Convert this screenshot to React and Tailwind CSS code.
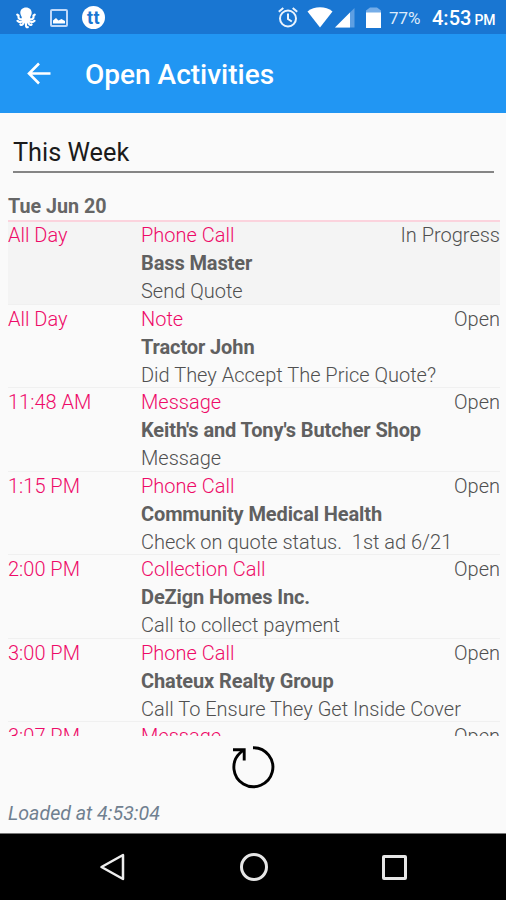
const activities = [
  { time: "All Day", type: "Phone Call", status: "In Progress", company: "Bass Master", note: "Send Quote", selected: true },
  { time: "All Day", type: "Note", status: "Open", company: "Tractor John", note: "Did They Accept The Price Quote?" },
  { time: "11:48 AM", type: "Message", status: "Open", company: "Keith's and Tony's Butcher Shop", note: "Message" },
  { time: "1:15 PM", type: "Phone Call", status: "Open", company: "Community Medical Health", note: "Check on quote status.  1st ad 6/21" },
  { time: "2:00 PM", type: "Collection Call", status: "Open", company: "DeZign Homes Inc.", note: "Call to collect payment" },
  { time: "3:00 PM", type: "Phone Call", status: "Open", company: "Chateux Realty Group", note: "Call To Ensure They Get Inside Cover" },
  { time: "3:07 PM", type: "Message", status: "Open", company: "", note: "" },
];

function OctopusIcon() {
  return (
    <svg width="20" height="22" viewBox="0 0 20 22" fill="none" stroke="#fff" strokeWidth="2.2" strokeLinecap="round">
      <path d="M10 .5c-3.500 0-5.700 2.300-5.700 5.400 0 2 1.400 3 1.500 4.800l.2 4.800h8l.2-4.800c.1-1.800 1.500-2.800 1.500-4.800C15.700 2.800 13.500.5 10 .5z" fill="#fff" stroke="none" />
      <path d="M7 12c-3 1-5 0-4.500-3.500L1.300 7.700M13 12c3 1 5 0 4.500-3.500l1.200-.8" />
      <path d="M7.500 13c-2 3-4.500 2.500-6 .8M12.500 13c2 3 4.500 2.500 6 .8" />
      <path d="M8 14c0 3-2 4.500-3.600 3.500M12 14c0 3 2 4.500 3.600 3.500M10 14v4c0 1.500.6 2.500 1.800 2.200" />
    </svg>
  );
}

function PictureIcon() {
  return (
    <svg width="18" height="18" viewBox="0 0 18 18">
      <rect x="1" y="1" width="16" height="16" rx="1" fill="none" stroke="#bfd9fa" strokeWidth="2" />
      <path d="M3 14.500v-3l3-2.500 2.500 2.500 3-1.500 3.500 2v2.500z" fill="#fff" />
    </svg>
  );
}

function AlarmIcon() {
  return (
    <svg width="20" height="21" viewBox="0 0 20 21" fill="none" stroke="#eaf3fd" strokeWidth="2">
      <circle cx="10" cy="11.500" r="8" />
      <path d="M10 6.500V12l3.800 2.500M.8 4.800 5.300 1M19.200 4.800 14.700 1" />
    </svg>
  );
}

function StatusBar() {
  return (
    <div className="flex h-[34px] shrink-0 items-start bg-[#1976d2] text-white">
      <div className="ml-4 mt-[7px]"><OctopusIcon /></div>
      <div className="ml-[14px] mt-[9px]"><PictureIcon /></div>
      <div className="ml-[14px] mt-[6px] flex size-[23px] items-center justify-center rounded-full bg-white text-[18px] leading-none font-bold tracking-[0.5px] text-[#1976d2]">
        tt
      </div>
      <div className="mt-[7px] ml-[173px]"><AlarmIcon /></div>
      <svg className="mt-[7px] ml-[9px]" width="26" height="21" viewBox="0 0 26 21">
        <path d="M.5 4.500C4 1.700 8.300.3 13 .3s9 1.400 12.500 4.200L13 20.500z" fill="#fff" />
      </svg>
      <svg className="mt-[8px] ml-[2px]" width="20" height="20" viewBox="0 0 20 20">
        <path d="M0 19.500 19.500 0v19.500z" fill="#5e9fe2" />
        <path d="M0 19.500 15 4.500v15z" fill="#fff" />
      </svg>
      <svg className="mt-[7px] ml-[11px]" width="15" height="21" viewBox="0 0 15 21">
        <path d="M0 3.500 4 .5h7l4 3V6H0z" fill="#75ade8" />
        <path d="M0 5.500h15V21H0z" fill="#fff" />
      </svg>
      <span className="mt-[6px] ml-[8px] w-[43px] text-[17px] leading-6 whitespace-nowrap text-[#dceafa]">77%</span>
      <span className="mt-[6px] text-[20px] leading-6 font-medium whitespace-nowrap">
        4:53<span className="ml-[3px] text-[14px]">PM</span>
      </span>
    </div>
  );
}

function ActivityRow({ activity }) {
  return (
    <div
      className={`flex h-[83.450px] shrink-0 border-b border-[#f0f0f0] text-[20px] leading-[28px] font-light ${
        activity.selected ? "bg-[#f4f4f4]" : ""
      }`}
    >
      <div className="w-[133px] shrink-0 text-[#ee0a68]">{activity.time}</div>
      <div className="min-w-0 flex-1 whitespace-pre">
        <div className="flex justify-between">
          <span className="text-[#ee0a68]">{activity.type}</span>
          <span className="text-[#505050]">{activity.status}</span>
        </div>
        <div className="font-bold tracking-[-0.110px] text-[#606060]">{activity.company}</div>
        <div className="text-[#505050]">{activity.note}</div>
      </div>
    </div>
  );
}

export default function App() {
  return (
    <div className="flex h-[900px] w-[506px] flex-col overflow-hidden bg-[#fafafa] font-[Roboto,sans-serif]">
      <StatusBar />

      <header className="flex h-[79px] shrink-0 items-center bg-[#2196f3] text-white">
        <svg className="ml-[27px]" width="25" height="24" viewBox="0 0 25 24" fill="none" stroke="#fff" strokeWidth="2.600">
          <path d="M23.500 11.500H3M12 1.500 2 11.500 12 21.500" />
        </svg>
        <h1 className="mt-[2px] ml-[33px] text-[28px] leading-8 font-medium">Open Activities</h1>
      </header>

      <div className="mr-[12px] ml-[13px] flex h-[60px] shrink-0 items-end border-b-2 border-[#858585] pb-[2px] text-[25.300px] leading-8 text-[#1b1b1b]">
        This Week
      </div>

      <div className="relative z-10 mr-[6px] ml-2 h-[49px] shrink-0 border-b-2 border-[#fbd3dd] pt-5 text-[19.700px] leading-[28px] font-bold text-[#666]">
        Tue Jun 20
      </div>

      <div className="mr-[6px] ml-2 flex h-[514px] shrink-0 flex-col overflow-hidden">
        <div className="-mt-[0.600px] flex flex-col">
          {activities.map((activity) => (
            <ActivityRow key={activity.time + activity.type} activity={activity} />
          ))}
        </div>
      </div>

      <div className="flex h-[64px] shrink-0 justify-center pt-[9px]">
        <svg width="44" height="44" viewBox="0 0 44 44" fill="none" stroke="#000" strokeWidth="2.900">
          <path d="M22 2.700a19.500 19.500 0 1 1-13 5.300L12.500 5" />
          <path d="M2 4.800H13.200V15.500" />
        </svg>
      </div>

      <div className="h-[33px] shrink-0 pl-2 text-[19.600px] leading-[27px] text-[#708090] italic">Loaded at 4:53:04</div>

      <nav className="flex h-[67px] shrink-0 items-center border-t border-[#777] bg-black">
        <svg className="ml-[99px]" width="26" height="28" viewBox="0 0 26 28" fill="none" stroke="#eee" strokeWidth="2.500" strokeLinejoin="round">
          <path d="M24 2v24L2.500 14z" />
        </svg>
        <div className="ml-[115px] size-[28px] rounded-full border-[3px] border-[#e6e6e6]" />
        <div className="ml-[114px] size-[25px] rounded-[2px] border-[3px] border-[#e6e6e6]" />
      </nav>
    </div>
  );
}
